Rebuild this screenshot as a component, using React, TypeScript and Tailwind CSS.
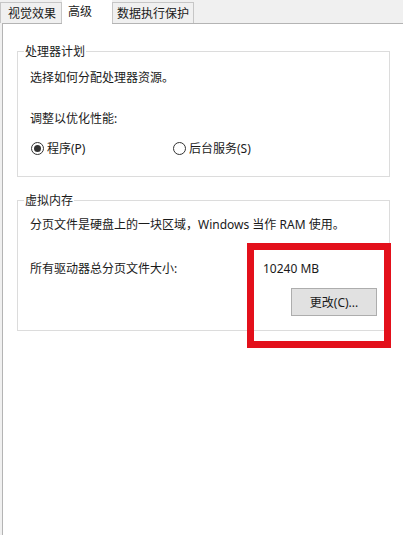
const FONT = "font-['Noto_Sans','Noto_Sans_CJK_SC',sans-serif]";

function Radio({ checked, label, className }: { checked?: boolean; label: string; className?: string }) {
  return (
    <label className={"flex items-center " + (className ?? "")}>
      <span className="flex h-[13px] w-[13px] items-center justify-center rounded-full border border-[#333333] bg-white">
        {checked && <span className="h-[7px] w-[7px] rounded-full bg-[#333333]" />}
      </span>
      <span className="ml-[3px]">{label}</span>
    </label>
  );
}

function Group({ title, children, className }: { title: string; children: React.ReactNode; className?: string }) {
  return (
    <fieldset className={"w-[373px] border border-[#dcdcdc] px-[12px] " + (className ?? "")}>
      <legend className="-ml-[6px] px-[1px] leading-[17px]">{title}</legend>
      {children}
    </fieldset>
  );
}

export default function App() {
  return (
    <div className={`${FONT} relative h-[535px] w-[403px] overflow-hidden bg-[#f0f0f0] text-[12px] leading-[17px] text-[#1a1a1a]`}>
      <div className="flex h-[23px] items-end">
        <div className="flex h-[21px] w-[62px] items-center border border-b-0 border-[#c6c6c6] bg-[#f0f0f0] pl-[7px]">视觉效果</div>
        <div className="relative z-10 -mb-px flex h-[24px] w-[50px] items-start bg-white pl-[6px] pt-[3px]">高级</div>
        <div className="flex h-[21px] w-[82px] items-center border border-b-0 border-[#c6c6c6] bg-[#f0f0f0] pl-[4px]">数据执行保护</div>
      </div>

      <div className="ml-[2px] h-[512px] border-l border-t border-[#b4b4b4] bg-white pl-[14px] pt-[19px]">
        <Group title="处理器计划" className="pb-[19px]">
          <p className="mt-[9px]">选择如何分配处理器资源。</p>
          <p className="mt-[24px]">调整以优化性能:</p>
          <div className="mt-[13px] flex items-center pl-[1px]">
            <Radio checked label="程序(P)" className="w-[142px]" />
            <Radio label="后台服务(S)" />
          </div>
        </Group>

        <Group title="虚拟内存" className="mt-[15px] pb-[14px]">
          <p className="mt-[7px]">分页文件是硬盘上的一块区域，Windows 当作 RAM 使用。</p>
          <div className="mt-[27px] flex">
            <span className="w-[233px]">所有驱动器总分页文件大小:</span>
            <span>10240 MB</span>
          </div>
          <button
            type="button"
            className="ml-[261px] mt-[11px] flex h-[28px] w-[86px] items-center justify-center border border-[#adadad] bg-[#e1e1e1]"
          >
            更改(C)...
          </button>
        </Group>
      </div>

      <div className="absolute left-[247px] top-[243px] h-[105px] w-[144px] border-[7px] border-[#e3101b]" />
    </div>
  );
}
